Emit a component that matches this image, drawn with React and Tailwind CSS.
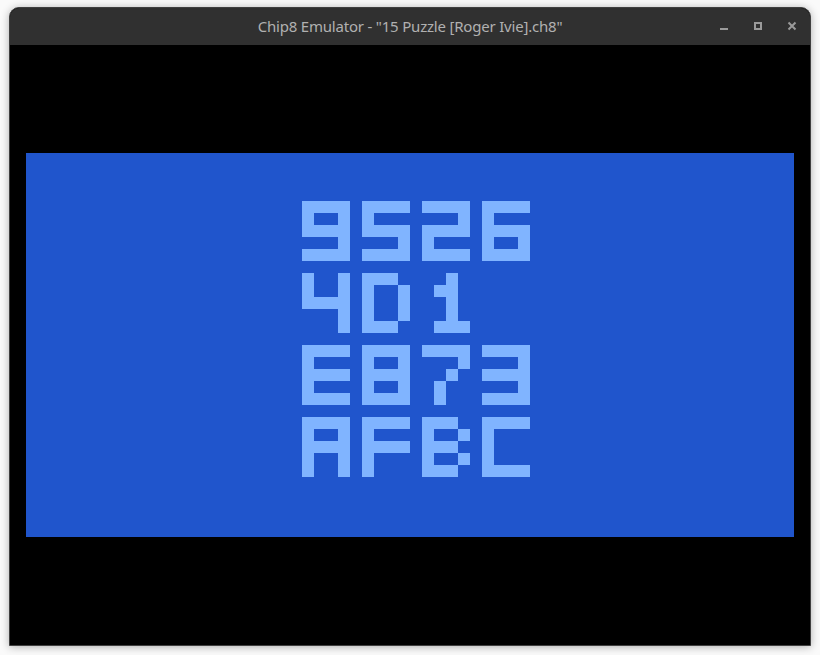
import React from 'react'

// CHIP-8 built-in font, 4x5 sprites
const FONT = {
  '1': [0x20, 0x60, 0x20, 0x20, 0x70],
  '2': [0xf0, 0x10, 0xf0, 0x80, 0xf0],
  '3': [0xf0, 0x10, 0xf0, 0x10, 0xf0],
  '4': [0x90, 0x90, 0xf0, 0x10, 0x10],
  '5': [0xf0, 0x80, 0xf0, 0x10, 0xf0],
  '6': [0xf0, 0x80, 0xf0, 0x90, 0xf0],
  '7': [0xf0, 0x10, 0x20, 0x40, 0x40],
  '8': [0xf0, 0x90, 0xf0, 0x90, 0xf0],
  '9': [0xf0, 0x90, 0xf0, 0x10, 0xf0],
  A: [0xf0, 0x90, 0xf0, 0x90, 0x90],
  B: [0xe0, 0x90, 0xe0, 0x90, 0xe0],
  C: [0xf0, 0x80, 0x80, 0x80, 0xf0],
  D: [0xe0, 0x90, 0x90, 0x90, 0xe0],
  E: [0xf0, 0x80, 0xf0, 0x80, 0xf0],
  F: [0xf0, 0x80, 0xf0, 0x80, 0x80],
}

const BOARD = ['9526', '4D1 ', 'E873', 'AFBC']
const SCALE = 12

function buildPixels() {
  const px = []
  BOARD.forEach((row, r) => {
    row.split('').forEach((ch, c) => {
      const sprite = FONT[ch]
      if (!sprite) return
      sprite.forEach((bits, y) => {
        for (let x = 0; x < 4; x++) {
          if (bits & (0x80 >> x)) px.push([23 + c * 5 + x, 4 + r * 6 + y])
        }
      })
    })
  })
  return px
}

function Screen() {
  const pixels = buildPixels()
  return (
    <svg width={64 * SCALE} height={32 * SCALE} viewBox={`0 0 ${64 * SCALE} ${32 * SCALE}`} shapeRendering="crispEdges">
      <rect width={64 * SCALE} height={32 * SCALE} fill="#2055cc" />
      {pixels.map(([x, y]) => (
        <rect key={`${x}-${y}`} x={x * SCALE} y={y * SCALE} width={SCALE} height={SCALE} fill="#80b4ff" />
      ))}
    </svg>
  )
}

export default function App() {
  return (
    <div className="w-[820px] h-[655px] bg-[#fafafa] pt-[7px] pl-[9px] overflow-hidden">
      <div className="w-[802px] rounded-t-[10px] border border-[#404040] bg-black shadow-[0_1px_8px_rgba(0,0,0,0.3)] overflow-hidden">
        {/* title bar */}
        <div className="relative h-[37px] bg-[#303030] flex items-center justify-center">
          <span className="text-[15px] text-[#b0b0b0] font-['Noto_Sans',sans-serif] tracking-[-0.2px]">
            Chip8 Emulator - "15 Puzzle [Roger Ivie].ch8"
          </span>
          <div className="absolute right-0 top-0 h-full flex items-center">
            <svg width="34" height="37" viewBox="0 0 34 37">
              <rect x="12" y="20" width="8" height="2" fill="#9a9a9a" />
            </svg>
            <svg width="34" height="37" viewBox="0 0 34 37">
              <rect x="13" y="15" width="6" height="6" fill="none" stroke="#9a9a9a" strokeWidth="2" />
            </svg>
            <svg width="34" height="37" viewBox="0 0 34 37">
              <path d="M12.5 14.5l7 7M19.5 14.5l-7 7" stroke="#9a9a9a" strokeWidth="2" />
            </svg>
          </div>
        </div>
        {/* display */}
        <div className="w-[800px] h-[600px] bg-black flex items-center justify-center">
          <Screen />
        </div>
      </div>
    </div>
  )
}
